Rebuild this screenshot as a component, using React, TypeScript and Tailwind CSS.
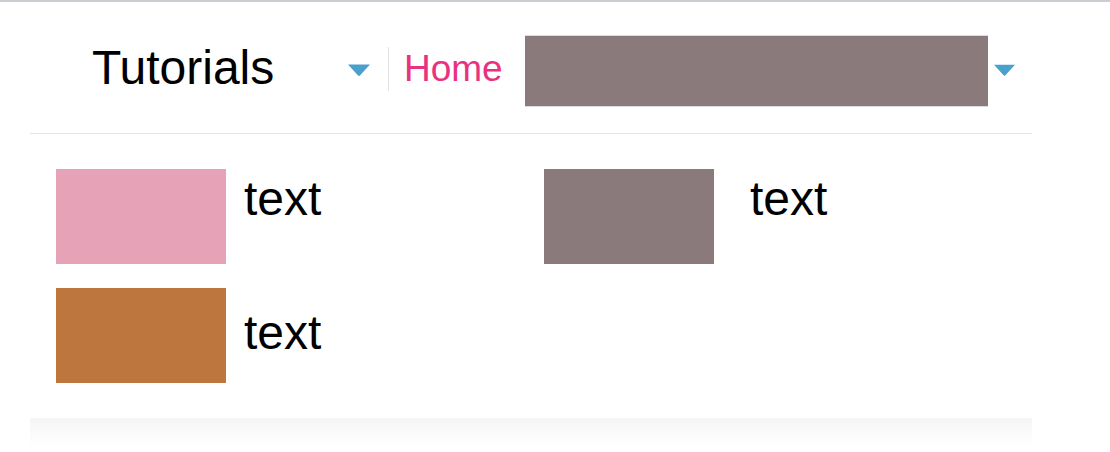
import { FC } from 'react'

const Caret: FC<{ className?: string }> = ({ className }) => (
  <svg viewBox="0 0 22 12" className={className} aria-hidden="true">
    <path d="M0 0.5h22L12.2 11.3a1.6 1.6 0 0 1-2.4 0z" fill="#4aa0cd" />
  </svg>
)

interface TileProps {
  color: string
  gap: string
  offset: string
}

const Tile: FC<TileProps> = ({ color, gap, offset }) => (
  <div className={`flex items-start ${gap}`}>
    <div className={`w-[170px] h-[95px] shrink-0 ${color}`} />
    <span className={`text-[48px] leading-none text-black ${offset}`}>text</span>
  </div>
)

export default function App() {
  return (
    <div className="w-[1110px] h-[452px] bg-white font-['Liberation_Sans',Arial,sans-serif] overflow-hidden">
      <div className="h-[2px] bg-[#c9ced3]" />
      <div className="ml-[30px] w-[1002px]">
        <header className="flex items-center h-[132px] border-b border-[#e0e6ea]">
          <span className="w-[318px] pl-[62px] text-[48px] leading-none text-black shrink-0">
            Tutorials
          </span>
          <Caret className="w-[22px] h-[12px] shrink-0 mt-[4px]" />
          <div className="w-px h-[44px] bg-[#dfe4e8] ml-[18px] mt-[2px]" />
          <a className="ml-[15px] text-[37px] leading-none text-[#e9327f] mt-[2px]">Home</a>
          <div className="ml-[22px] w-[463px] h-[72px] bg-[#8a7a7b] border-y border-[#dcdcdc] mt-[6px]" />
          <Caret className="ml-[6px] w-[21px] h-[12px] shrink-0 mt-[4px]" />
        </header>
        <main className="grid grid-cols-[488px_1fr] gap-y-6 pl-[26px] pt-[35px]">
          <Tile color="bg-[#e6a2b7]" gap="gap-[18px]" offset="mt-[6px]" />
          <Tile color="bg-[#8a7a7b]" gap="gap-[36px]" offset="mt-[6px]" />
          <Tile color="bg-[#bd763e]" gap="gap-[18px]" offset="mt-[21px]" />
        </main>
        <div className="mt-[35px] h-[28px] bg-gradient-to-b from-[#f5f5f5] to-white" />
      </div>
    </div>
  )
}
